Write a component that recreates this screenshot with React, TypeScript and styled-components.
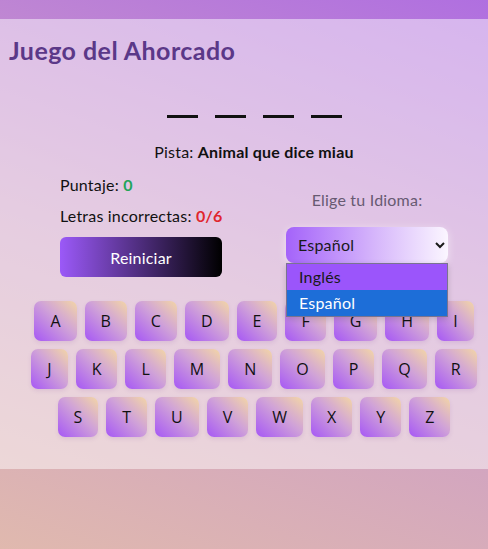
import React from "react";
import styled, { createGlobalStyle } from "styled-components";

const GlobalStyle = createGlobalStyle`
  html, body { margin: 0; padding: 0; }
  body {
    min-height: 100vh;
    font-family: "Lato", "Noto Sans", sans-serif;
    background: linear-gradient(20deg, #e0b9ae 0%, #cfa0c4 45%, #b06fe0 100%);
    background-attachment: fixed;
  }
`;

const Page = styled.div`
  padding-top: 19px;
`;

const Panel = styled.main`
  background: rgba(255, 255, 255, 0.48);
  padding: 17px 0 32px;
`;

const Title = styled.h1`
  margin: 0;
  padding-left: 9px;
  font-size: 25px;
  line-height: 28px;
  letter-spacing: 0.45px;
  font-weight: 700;
  color: #5b3888;
`;

const Content = styled.div`
  padding-left: 20px;
  display: flex;
  flex-direction: column;
  align-items: center;
  color: #111;
  font-size: 16px;
  letter-spacing: 0.2px;
`;

const Word = styled.div`
  display: flex;
  gap: 17px;
  margin-top: 27px;
`;

const Slot = styled.span`
  width: 31px;
  height: 24px;
  border-bottom: 3px solid #111;
`;

const Hint = styled.p`
  margin: 24px 0 0;
  line-height: 20px;
  b { font-weight: 700; }
`;

const InfoRow = styled.div`
  display: grid;
  grid-template-columns: 162px 162px;
  column-gap: 64px;
  align-items: center;
  margin-top: 13px;
`;

const Stats = styled.div`
  display: flex;
  flex-direction: column;
`;

const Stat = styled.p`
  margin: 0 0 12px;
  line-height: 19px;
  white-space: nowrap;
`;

const Value = styled.b<{ $tone: "good" | "bad" }>`
  color: ${(p) => (p.$tone === "good" ? "#22a45a" : "#e0262e")};
`;

const ResetButton = styled.button`
  width: 162px;
  height: 40px;
  border: none;
  border-radius: 6px;
  background: linear-gradient(to right, #9b59f8, #000000);
  color: #fff;
  font-family: inherit;
  font-size: 16px;
  letter-spacing: 0.2px;
  cursor: pointer;
`;

const LangBox = styled.div`
  display: flex;
  flex-direction: column;
  align-items: center;
  gap: 18px;
`;

const LangLabel = styled.label`
  color: #675a72;
  line-height: 19px;
`;

const SelectWrap = styled.div`
  position: relative;
`;

const Select = styled.select`
  width: 162px;
  height: 36px;
  border: none;
  border-radius: 8px;
  padding: 0 8px;
  font-family: inherit;
  font-size: 16px;
  letter-spacing: 0.2px;
  color: #1a1a1a;
  background: linear-gradient(to right, #a463fa 0%, #d6b6fb 55%, #fbf6ff 100%);
  box-shadow: 0 2px 8px rgba(255, 255, 255, 0.5);
`;

const Menu = styled.ul`
  position: absolute;
  top: 100%;
  left: 0;
  width: 162px;
  margin: 0;
  padding: 0;
  list-style: none;
  border: 1px solid #7a7390;
  box-sizing: border-box;
  z-index: 5;
  box-shadow: 0 2px 6px rgba(0, 0, 0, 0.15);
`;

const Option = styled.li<{ $state: "hover" | "selected" }>`
  height: 26px;
  line-height: 26px;
  padding-left: 12px;
  font-size: 16px;
  color: ${(p) => (p.$state === "selected" ? "#fff" : "#1a1a1a")};
  background: ${(p) => (p.$state === "selected" ? "#1d6ed8" : "#9b55fb")};
`;

const Keyboard = styled.div`
  margin-top: 24px;
  display: flex;
  flex-direction: column;
  align-items: center;
  gap: 8px;
`;

const KeyRow = styled.div`
  display: flex;
  gap: 8px;
`;

const Key = styled.button`
  height: 40px;
  padding: 0 16px;
  border: none;
  border-radius: 7px;
  font-family: "Open Sans", "Noto Sans", sans-serif;
  font-size: 16px;
  color: #111;
  background: linear-gradient(to top right, #a657f5 0%, #d0a2d8 55%, #f3d6a6 100%);
  box-shadow: 0 2px 4px rgba(120, 60, 160, 0.12);
  cursor: pointer;
`;

const rows = ["ABCDEFGHI", "JKLMNOPQR", "STUVWXYZ"];

export default function App() {
  return (
    <>
      <GlobalStyle />
      <Page>
        <Panel>
          <Title>Juego del Ahorcado</Title>
          <Content>
            <Word>
              {[0, 1, 2, 3].map((i) => (
                <Slot key={i} />
              ))}
            </Word>
            <Hint>
              Pista: <b>Animal que dice miau</b>
            </Hint>
            <InfoRow>
              <Stats>
                <Stat>
                  Puntaje: <Value $tone="good">0</Value>
                </Stat>
                <Stat>
                  Letras incorrectas: <Value $tone="bad">0/6</Value>
                </Stat>
                <ResetButton>Reiniciar</ResetButton>
              </Stats>
              <LangBox>
                <LangLabel htmlFor="idioma">Elige tu Idioma:</LangLabel>
                <SelectWrap>
                  <Select id="idioma" defaultValue="es">
                    <option value="en">Inglés</option>
                    <option value="es">Español</option>
                  </Select>
                  <Menu>
                    <Option $state="hover">Inglés</Option>
                    <Option $state="selected">Español</Option>
                  </Menu>
                </SelectWrap>
              </LangBox>
            </InfoRow>
            <Keyboard>
              {rows.map((r) => (
                <KeyRow key={r}>
                  {r.split("").map((l) => (
                    <Key key={l}>{l}</Key>
                  ))}
                </KeyRow>
              ))}
            </Keyboard>
          </Content>
        </Panel>
      </Page>
    </>
  );
}
